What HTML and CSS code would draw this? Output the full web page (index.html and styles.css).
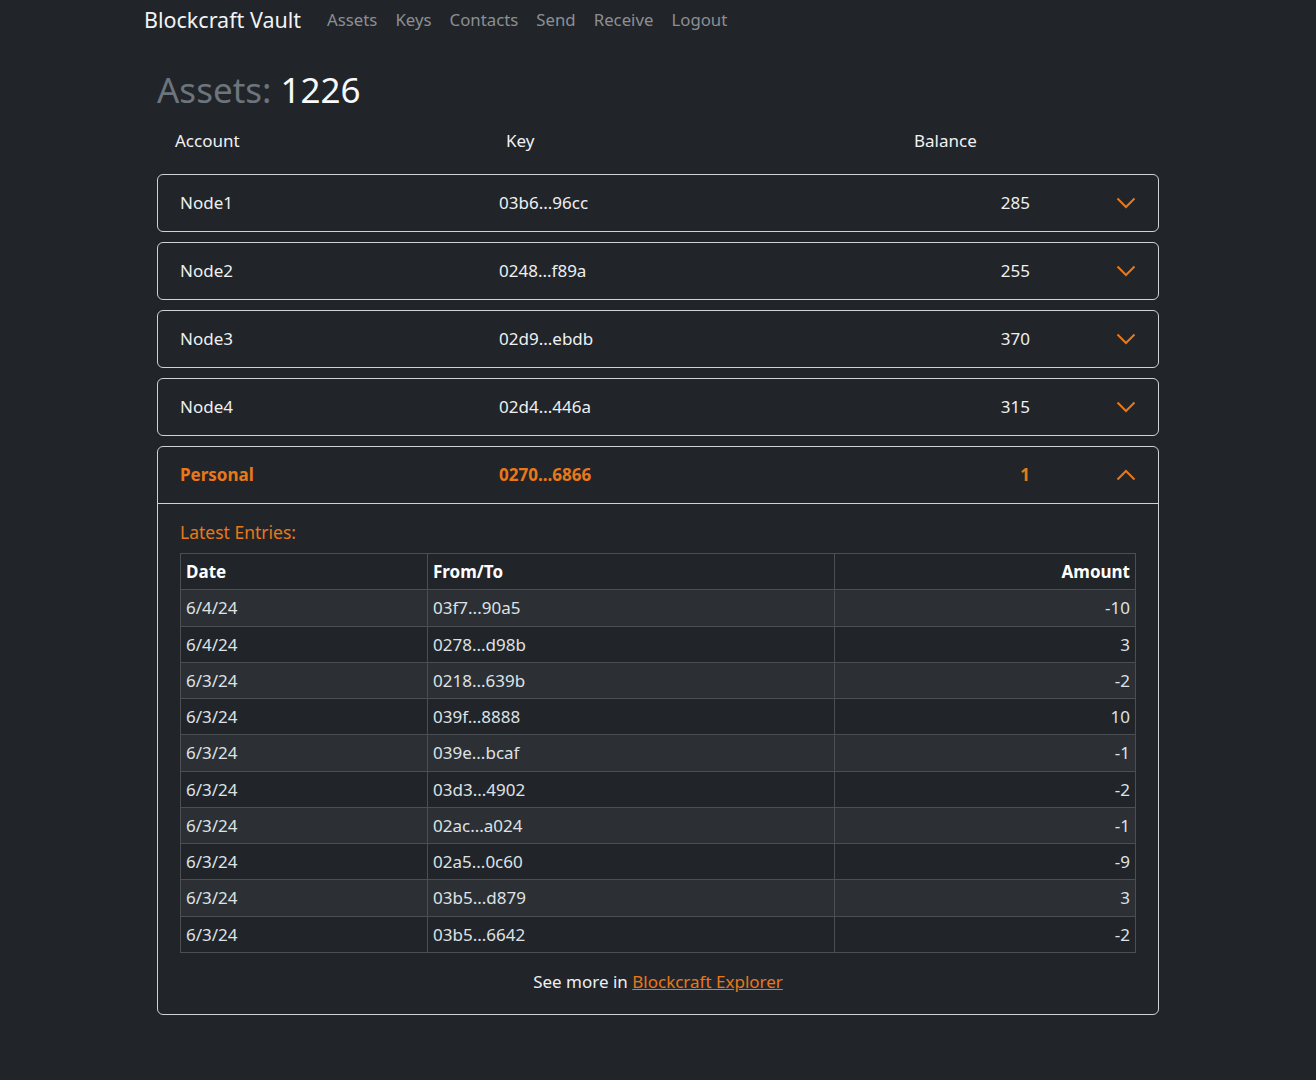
FILE: index.html
```html
<!DOCTYPE html>
<html lang="en">
<head>
<meta charset="utf-8">
<title>Blockcraft Vault</title>
<link rel="stylesheet" href="styles.css">
</head>
<body>
<nav class="navbar">
  <a class="brand" href="#">Blockcraft Vault</a>
  <ul class="nav-links">
    <li><a href="#">Assets</a></li>
    <li><a href="#">Keys</a></li>
    <li><a href="#">Contacts</a></li>
    <li><a href="#">Send</a></li>
    <li><a href="#">Receive</a></li>
    <li><a href="#">Logout</a></li>
  </ul>
</nav>
<main class="container">
  <h1 class="title"><span class="muted">Assets:</span> 1226</h1>
  <div class="col-heads">
    <span>Account</span><span>Key</span><span>Balance</span>
  </div>

  <div class="acc-card">
    <div class="acc-head">
      <span>Node1</span><span>03b6...96cc</span><span class="bal">285</span>
      <svg class="chev" width="20" height="12" viewBox="0 0 20 12"><polyline points="1.5,1.5 10,10 18.5,1.5" fill="none" stroke="currentColor" stroke-width="2"/></svg>
    </div>
  </div>
  <div class="acc-card">
    <div class="acc-head">
      <span>Node2</span><span>0248...f89a</span><span class="bal">255</span>
      <svg class="chev" width="20" height="12" viewBox="0 0 20 12"><polyline points="1.5,1.5 10,10 18.5,1.5" fill="none" stroke="currentColor" stroke-width="2"/></svg>
    </div>
  </div>
  <div class="acc-card">
    <div class="acc-head">
      <span>Node3</span><span>02d9...ebdb</span><span class="bal">370</span>
      <svg class="chev" width="20" height="12" viewBox="0 0 20 12"><polyline points="1.5,1.5 10,10 18.5,1.5" fill="none" stroke="currentColor" stroke-width="2"/></svg>
    </div>
  </div>
  <div class="acc-card">
    <div class="acc-head">
      <span>Node4</span><span>02d4...446a</span><span class="bal">315</span>
      <svg class="chev" width="20" height="12" viewBox="0 0 20 12"><polyline points="1.5,1.5 10,10 18.5,1.5" fill="none" stroke="currentColor" stroke-width="2"/></svg>
    </div>
  </div>
  <div class="acc-card open">
    <div class="acc-head">
      <span>Personal</span><span>0270...6866</span><span class="bal">1</span>
      <svg class="chev" width="20" height="12" viewBox="0 0 20 12"><polyline points="1.5,10.5 10,2 18.5,10.5" fill="none" stroke="currentColor" stroke-width="2"/></svg>
    </div>
    <div class="acc-body">
      <h6 class="latest">Latest Entries:</h6>
      <table class="entries">
        <thead>
          <tr><th class="c-date">Date</th><th class="c-from">From/To</th><th class="c-amt">Amount</th></tr>
        </thead>
        <tbody>
          <tr><td>6/4/24</td><td>03f7...90a5</td><td class="c-amt">-10</td></tr>
          <tr><td>6/4/24</td><td>0278...d98b</td><td class="c-amt">3</td></tr>
          <tr><td>6/3/24</td><td>0218...639b</td><td class="c-amt">-2</td></tr>
          <tr><td>6/3/24</td><td>039f...8888</td><td class="c-amt">10</td></tr>
          <tr><td>6/3/24</td><td>039e...bcaf</td><td class="c-amt">-1</td></tr>
          <tr><td>6/3/24</td><td>03d3...4902</td><td class="c-amt">-2</td></tr>
          <tr><td>6/3/24</td><td>02ac...a024</td><td class="c-amt">-1</td></tr>
          <tr><td>6/3/24</td><td>02a5...0c60</td><td class="c-amt">-9</td></tr>
          <tr><td>6/3/24</td><td>03b5...d879</td><td class="c-amt">3</td></tr>
          <tr><td>6/3/24</td><td>03b5...6642</td><td class="c-amt">-2</td></tr>
        </tbody>
      </table>
      <p class="see-more">See more in <a href="#">Blockcraft Explorer</a></p>
    </div>
  </div>
</main>
</body>
</html>
```

FILE: styles.css
```css
* { box-sizing: border-box; }

body {
  margin: 0;
  background: #212529;
  color: #dee2e6;
  font-family: "Noto Sans", "Open Sans", sans-serif;
  font-size: 17px;
  line-height: 24px;
}

.navbar {
  display: flex;
  align-items: center;
  height: 40px;
  padding-left: 144px;
}

.brand {
  color: #f2f3f4;
  text-decoration: none;
  font-size: 21.5px;
  margin-right: 26px;
}

.nav-links {
  display: flex;
  gap: 18px;
  list-style: none;
  margin: 0;
  padding: 0;
  font-size: 16.8px;
}

.nav-links a {
  color: #8c8f93;
  text-decoration: none;
}

.container {
  width: 1002px;
  margin: 0 auto;
}

.title {
  font-size: 35px;
  font-weight: 400;
  line-height: 48px;
  margin: 26px 0 0;
  color: #f8f9fa;
}

.muted { color: #6c757d; }

.col-heads {
  display: grid;
  grid-template-columns: 331px 408px auto;
  padding-left: 18px;
  margin: 15px 0 21px;
  color: #f0f1f2;
}

.acc-card {
  border: 1px solid #cfd3d7;
  border-radius: 6px;
  margin-bottom: 10px;
}

.acc-head {
  display: grid;
  grid-template-columns: 319px 1fr auto 20px;
  align-items: center;
  height: 56px;
  padding: 0 22px;
  color: #eef0f2;
}

.bal {
  margin-right: 86px;
  text-align: right;
}

.chev {
  color: #e9781a;
  display: block;
}

.open .acc-head {
  color: #e9781a;
  font-weight: 700;
  border-bottom: 1px solid #cfd3d7;
  height: 57px;
}

.acc-body {
  padding: 16px 22px 20px;
}

.latest {
  margin: 0 0 9px;
  font-size: 17.5px;
  font-weight: 400;
  line-height: 24px;
  color: #e9781a;
}

.entries {
  width: 100%;
  border-collapse: collapse;
  border: 1px solid #4a4f54;
}

.entries th,
.entries td {
  border: 1px solid #4a4f54;
  padding: 6px 5px;
  line-height: 23.27px;
  text-align: left;
  font-weight: 400;
}

.entries th {
  font-weight: 700;
  color: #ffffff;
}

.c-date { width: 247px; }
.c-from { width: 407px; }
.entries .c-amt { text-align: right; }

.entries tbody tr:nth-child(odd) td {
  background: #2c3034;
}

.see-more {
  margin: 17px 0 0;
  text-align: center;
  color: #eef0f2;
}

.see-more a {
  color: #e9781a;
}
```
